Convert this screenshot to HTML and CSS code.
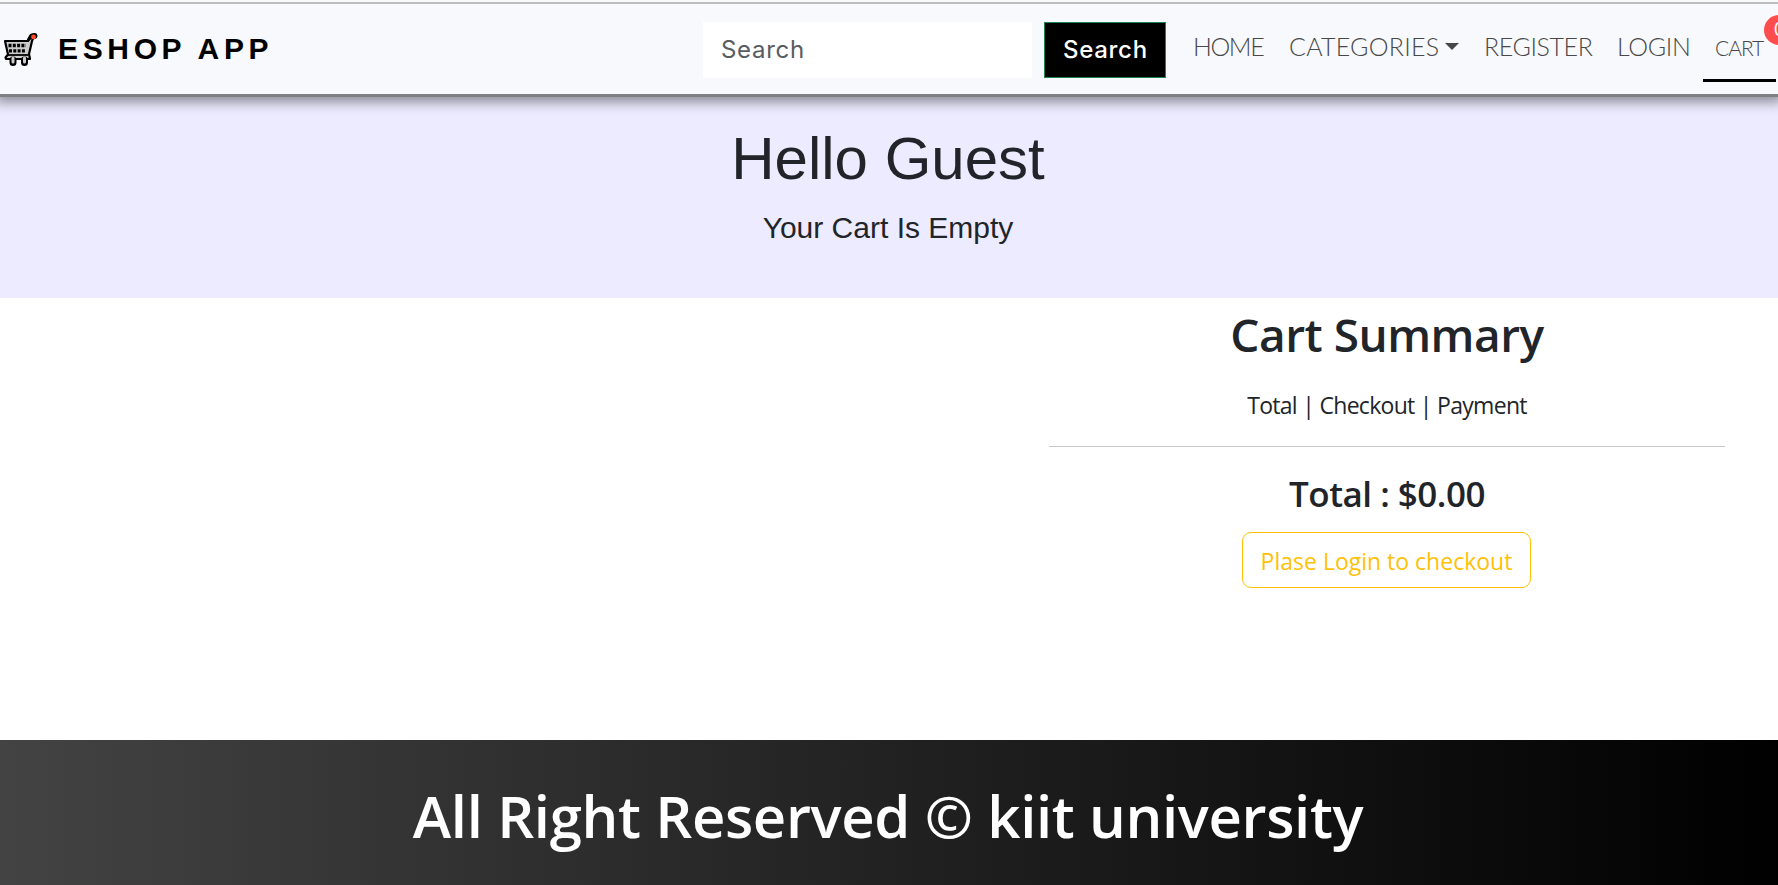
FILE: index.html
```html
<!DOCTYPE html>
<html lang="en">
<head>
<meta charset="utf-8">
<title>Eshop App</title>
<link rel="stylesheet" href="styles.css">
</head>
<body>
<header class="navbar">
  <a class="brand">
    <svg class="brand-icon" width="36" height="36" viewBox="0 0 36 36">
      <path d="M28 8 L30 4.500 L32.500 4" fill="none" stroke="#000" stroke-width="6" stroke-linecap="round" stroke-linejoin="round"/>
      <path d="M3 9 H26 L28.500 6 L30.500 7 L27 22 L28 27 H4 L3.500 25.500 L6 22.500 Z" fill="#ccc" stroke="#000" stroke-width="2.200" stroke-linejoin="round"/>
      <path d="M6 23 H26" stroke="#000" stroke-width="1.800"/>
      <path d="M6.500 13.500 H24 M7 18.800 H23" stroke="#000" stroke-width="3.300" stroke-dasharray="3 1.300"/>
      <path d="M11 28 V30.500 M22.500 28 V30.500" stroke="#000" stroke-width="7" stroke-linecap="round"/>
      <path d="M11 26 V30 M22.500 26 V30" stroke="#ccc" stroke-width="3" stroke-linecap="round"/>
      <circle cx="31.500" cy="5" r="2.400" fill="#ff4a2a"/>
    </svg>
    <span class="brand-name">ESHOP APP</span>
  </a>
  <div class="search">
    <div class="search-input"><span>Search</span></div>
    <button class="search-button"><span>Search</span></button>
  </div>
  <nav class="menu">
    <a class="item home"><span>HOME</span></a>
    <a class="item categories"><span>CATEGORIES</span><i class="caret"></i></a>
    <a class="item register"><span>REGISTER</span></a>
    <a class="item login"><span>LOGIN</span></a>
    <a class="item cart"><span>CART</span><b class="badge">0</b></a>
  </nav>
</header>
<section class="hero">
  <h1 class="hello">Hello Guest</h1>
  <p class="empty">Your Cart Is Empty</p>
</section>
<main class="content">
  <section class="summary">
    <h2 class="title">Cart Summary</h2>
    <p class="steps">Total | Checkout | Payment</p>
    <hr class="rule">
    <h4 class="total">Total : $0.00</h4>
    <button class="login-button">Plase Login to checkout</button>
  </section>
</main>
<footer class="footer"><h1 class="rights">All Right Reserved © kiit university</h1></footer>
</body>
</html>
```
FILE: styles.css
```css
* { box-sizing: border-box; }
body { margin: 0; height: 885px; overflow: hidden; display: flex; flex-direction: column; background: #fff; color: #212529; font-family: "Open Sans", "Noto Sans", sans-serif; font-size: 23px; }
h1, h2, h4, p { margin: 0; white-space: nowrap; }
span { white-space: nowrap; }
.navbar { height: 97px; flex: none; display: flex; background: linear-gradient(#f8f9fa 2px, #bdbdbd 2px, #bdbdbd 4px, #f8f9fc 4px); border-bottom: 3px solid #7e7f81; box-shadow: 0 0 12px 5px rgba(0, 0, 0, .42); position: relative; }
.brand { width: 703px; display: flex; padding: 32px 0 0 2px; }
.brand-icon { flex: none; }
.brand-name { margin-left: 20px; font: 700 30px/34px "Liberation Sans", Arial, sans-serif; letter-spacing: 4.65px; color: #000; }
.search { display: flex; gap: 12px; padding-top: 22px; }
.search-input, .search-button { height: 56px; font: 400 24px/56px Inter, sans-serif; letter-spacing: .7px; }
.search-input { width: 329px; background: #fff; color: #595c5f; padding-left: 18px; }
.search-button { width: 122px; padding: 0 0 0 18px; background: #000; color: #fff; border: 1px solid #198754; line-height: 54px; text-align: left; font-weight: 500; }
.menu { display: flex; padding-top: 27px; margin-left: 27px; font: 300 25px/38px Lato, sans-serif; color: #484848; }
.item { display: flex; position: relative; flex: none; }
.home { width: 96px; letter-spacing: -1.4px; }
.categories { width: 195px; letter-spacing: .25px; }
.register { width: 133px; letter-spacing: -.4px; }
.login { width: 86px; letter-spacing: -.3px; }
.cart { width: 73px; height: 55px; border-bottom: 3px solid #000; padding-left: 12px; font-size: 21px; line-height: 42px; letter-spacing: -1px; }
.caret { border: 7px solid transparent; border-top-color: #484848; border-bottom: 0; height: 7px; margin: 16px 0 0 6px; }
.badge { position: absolute; left: 61px; top: -12px; width: 30px; height: 30px; border-radius: 15px; background: #ff4d4d; color: #fff; font: 400 18px/30px Inter, sans-serif; text-align: center; }
.hero { height: 201px; flex: none; background: #edebff; text-align: center; font-family: "Liberation Sans", Arial, sans-serif; padding: 27px 2px 0 0; }
.hello { font-size: 60px; line-height: 70px; font-weight: 400; }
.empty { font-size: 30px; line-height: 36px; margin-top: 16px; }
.content { height: 442px; flex: none; display: flex; justify-content: flex-end; padding-right: 53px; }
.summary { width: 676px; text-align: center; display: flex; flex-direction: column; align-items: center; }
.title { font-size: 46px; line-height: 58px; font-weight: 600; margin-top: 7px; letter-spacing: -.5px; }
.steps { line-height: 36px; margin-top: 24px; letter-spacing: -.7px; }
.rule { width: 100%; height: 1px; border: 0; background: #c8c9ca; margin: 23px 0 0; }
.total { font-size: 35px; line-height: 44px; font-weight: 600; margin-top: 25px; letter-spacing: -.5px; }
.login-button { width: 289px; height: 56px; margin: 16px 1px 0 0; padding: 1px 0 0; border: 1px solid #ffc107; border-radius: 9px; background: #fff; color: #ffc107; font: inherit; line-height: 54px; }
.footer { height: 145px; flex: none; background: linear-gradient(to right, #434343, #000); color: #fff; text-align: center; padding: 37px 2px 0 0; }
.rights { font-size: 58px; line-height: 78px; font-weight: 600; letter-spacing: -.36px; }
```
